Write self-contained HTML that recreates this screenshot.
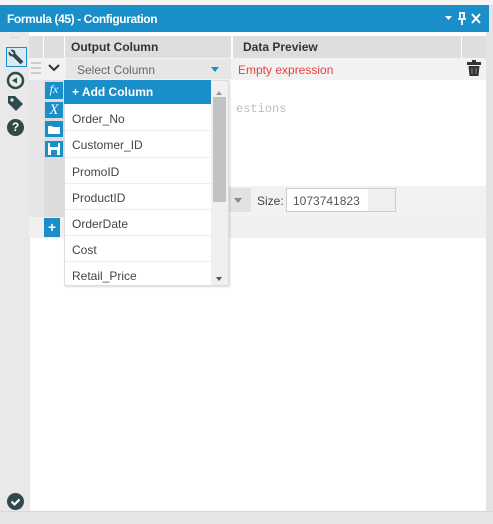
<!DOCTYPE html>
<html><head><style>
*{margin:0;padding:0;box-sizing:border-box}
body{width:493px;height:524px;position:relative;background:#fff;font-family:"Liberation Sans",sans-serif;overflow:hidden}
.a{position:absolute}
.t{font-size:12px;color:#444}
</style></head><body>
<div class="a" style="left:0;top:0;width:493px;height:5px;background:#f4f4f4"></div>
<div class="a" style="left:0;top:5px;width:489px;height:27px;background:#1a8ec8"></div>
<div class="a" style="left:7px;top:12px;color:#fff;font-size:12px;font-weight:bold;letter-spacing:-0.4px">Formula (45) - Configuration</div>
<svg class="a" style="left:444px;top:12px" width="40" height="14">
<path d="M1 4h7l-3.5 4z" fill="#fff"/>
<path d="M15 1h6M16 1v6h4V1M14 7h8M18 7v6" stroke="#fff" stroke-width="1.8" fill="none"/>
<path d="M28 2l8 9M36 2l-8 9" stroke="#fff" stroke-width="2"/>
</svg>
<div class="a" style="left:489px;top:5px;width:4px;height:519px;background:#e4e4e4"></div>
<!-- sidebar -->
<div class="a" style="left:0;top:32px;width:29px;height:479px;background:#e9e9e9"></div>
<div class="a" style="left:10px;top:32px;font-size:9px;color:#aaa">···</div>
<div class="a" style="left:6px;top:47px;width:21px;height:20px;border:1px solid #1a8ec8;background:#dceaf4"></div>
<svg class="a" style="left:8px;top:49px" width="17" height="17"><path d="M3 3l11 11" stroke="#2e4a4a" stroke-width="4"/><circle cx="4" cy="4" r="3.5" fill="#2e4a4a"/><path d="M1 1l4 4" stroke="#dceaf4" stroke-width="2"/></svg>
<svg class="a" style="left:6px;top:71px" width="19" height="19"><circle cx="9.5" cy="9.5" r="7.5" fill="none" stroke="#2e4a4a" stroke-width="2.5"/><path d="M6 9.5l5-3v6z" fill="#2e4a4a"/></svg>
<svg class="a" style="left:6px;top:94px" width="19" height="19"><path d="M2 2h7l8 8-7 7-8-8z" fill="#2e4a4a"/><circle cx="6" cy="6" r="1.6" fill="#e9e9e9"/></svg>
<div class="a" style="left:7px;top:119px;width:17px;height:17px;border-radius:50%;background:#2e4a4a;color:#fff;font-size:12px;font-weight:bold;text-align:center;line-height:17px">?</div>
<svg class="a" style="left:7px;top:493px" width="17" height="17"><circle cx="8.5" cy="8.5" r="8.5" fill="#2e4a4a"/><path d="M4.5 8.5l3 3 5-5" stroke="#fff" stroke-width="2.2" fill="none"/></svg>
<!-- right/bottom border -->
<div class="a" style="left:486px;top:32px;width:3px;height:479px;background:#e4e4e4"></div>
<div class="a" style="left:0;top:511px;width:493px;height:13px;background:#e6e6e6;border-top:1px solid #d8d8d8"></div>
<!-- header -->
<div class="a" style="left:29px;top:36px;width:457px;height:22px;background:#dedede"></div>
<div class="a" style="left:43px;top:36px;width:1px;height:22px;background:#fff"></div>
<div class="a" style="left:64px;top:36px;width:1px;height:22px;background:#fff"></div>
<div class="a" style="left:231px;top:36px;width:2px;height:22px;background:#fff"></div>
<div class="a" style="left:461px;top:36px;width:1px;height:22px;background:#fff"></div>
<div class="a" style="left:71px;top:40px;font-size:12px;font-weight:bold;color:#333">Output Column</div>
<div class="a" style="left:243px;top:40px;font-size:12px;font-weight:bold;color:#333">Data Preview</div>
<!-- row -->
<div class="a" style="left:29px;top:58px;width:457px;height:22px;background:#f2f2f2"></div>
<div class="a" style="left:31px;top:62px;width:10px;height:12px;border-top:2px solid #ccc;border-bottom:2px solid #ccc"></div>
<div class="a" style="left:31px;top:67px;width:10px;height:2px;background:#ccc"></div>
<svg class="a" style="left:48px;top:64px" width="12" height="8"><path d="M1 1l5 5 5-5" stroke="#333" stroke-width="2" fill="none"/></svg>
<div class="a" style="left:66px;top:59px;width:165px;height:20px;background:#e6e6e6"></div>
<div class="a t" style="left:77px;top:63px;color:#666">Select Column</div>
<div class="a" style="left:211px;top:67px;border:4px solid transparent;border-top:5px solid #1a8ec8"></div>
<div class="a" style="left:238px;top:63px;font-size:12px;color:#e84040">Empty expression</div>
<svg class="a" style="left:467px;top:60px" width="14" height="17"><rect x="0" y="2" width="14" height="3" fill="#333"/><rect x="5" y="0" width="4" height="2" fill="#333"/><path d="M1.5 6h11l-1 10h-9z" fill="#333"/><path d="M5 8v6M9 8v6" stroke="#888" stroke-width="1"/></svg>
<!-- expression area -->
<div class="a" style="left:29px;top:80px;width:15px;height:137px;background:#e6e6e6"></div>
<div class="a" style="left:44px;top:80px;width:20px;height:137px;background:#dcdcdc"></div>
<div class="a" style="left:45px;top:82px;width:18px;height:17px;background:#1a8ec8;color:#dff;font-style:italic;font-family:'Liberation Serif',serif;font-size:12px;text-align:center">fx</div>
<div class="a" style="left:45px;top:102px;width:18px;height:16px;background:#1a8ec8;color:#fff;font-style:italic;font-family:'Liberation Serif',serif;font-size:15px;line-height:16px;text-align:center">X</div>
<svg class="a" style="left:45px;top:121px" width="18" height="16"><rect width="18" height="16" fill="#1a8ec8"/><path d="M3 5h4l1 1h7v7H3z" fill="#fff"/></svg>
<svg class="a" style="left:45px;top:141px" width="18" height="16"><rect width="18" height="16" fill="#1a8ec8"/><rect x="3" y="2" width="12" height="12" fill="#fff"/><rect x="5" y="2" width="8" height="4" fill="#1a8ec8"/><rect x="6" y="9" width="6" height="5" fill="#1a8ec8"/></svg>
<div class="a" style="left:236px;top:102px;font-family:'Liberation Mono',monospace;font-size:12px;color:#bbb">estions</div>
<div class="a" style="left:64px;top:186px;width:422px;height:31px;background:#f2f2f2"></div>
<div class="a" style="left:228px;top:188px;width:23px;height:24px;background:#e2e2e2"></div>
<div class="a" style="left:234px;top:198px;border:4px solid transparent;border-top:5px solid #888"></div>
<div class="a t" style="left:257px;top:194px">Size:</div>
<div class="a" style="left:286px;top:188px;width:110px;height:24px;border:1px solid #ccc;background:#fff"></div>
<div class="a t" style="left:293px;top:194px;color:#555">1073741823</div>
<div class="a" style="left:368px;top:189px;width:27px;height:22px;background:#efefef"></div>
<div class="a" style="left:29px;top:217px;width:457px;height:21px;background:#f0f0f0"></div>
<div class="a" style="left:44px;top:218px;width:16px;height:19px;background:#1a8ec8;color:#fff;font-weight:bold;font-size:14px;text-align:center;line-height:19px">+</div>
<div class="a" style="left:29px;top:238px;width:1px;height:273px;background:#e4e4e4"></div>
<!-- dropdown -->
<div class="a" style="left:64px;top:80px;width:165px;height:206px;background:#fff;border:1px solid #ddd;box-shadow:1px 1px 2px rgba(0,0,0,.15)"></div>
<div class="a" style="left:64px;top:80px;width:147px;height:24px;background:#1a8ec8"></div>
<div class="a" style="left:72px;top:85px;color:#fff;font-weight:bold;font-size:12px">+ Add Column</div>
<div class="a" style="left:211px;top:81px;width:17px;height:204px;background:#f0f0f0"></div>
<div class="a" style="left:213px;top:97px;width:13px;height:105px;background:#c2c2c2"></div>
<div class="a" style="left:216px;top:88px;border:3px solid transparent;border-bottom:4px solid #999"></div>
<div class="a" style="left:216px;top:277px;border:3px solid transparent;border-top:4px solid #555"></div>
<div class="a t" style="left:72px;top:112px">Order_No</div>
<div class="a" style="left:65px;top:130px;width:146px;height:1px;background:#eee"></div>
<div class="a t" style="left:72px;top:138px">Customer_ID</div>
<div class="a" style="left:65px;top:157px;width:146px;height:1px;background:#eee"></div>
<div class="a t" style="left:72px;top:165px">PromoID</div>
<div class="a" style="left:65px;top:183px;width:146px;height:1px;background:#eee"></div>
<div class="a t" style="left:72px;top:191px">ProductID</div>
<div class="a" style="left:65px;top:209px;width:146px;height:1px;background:#eee"></div>
<div class="a t" style="left:72px;top:217px">OrderDate</div>
<div class="a" style="left:65px;top:235px;width:146px;height:1px;background:#eee"></div>
<div class="a t" style="left:72px;top:243px">Cost</div>
<div class="a" style="left:65px;top:261px;width:146px;height:1px;background:#eee"></div>
<div class="a t" style="left:72px;top:269px">Retail_Price</div>
</body></html>
